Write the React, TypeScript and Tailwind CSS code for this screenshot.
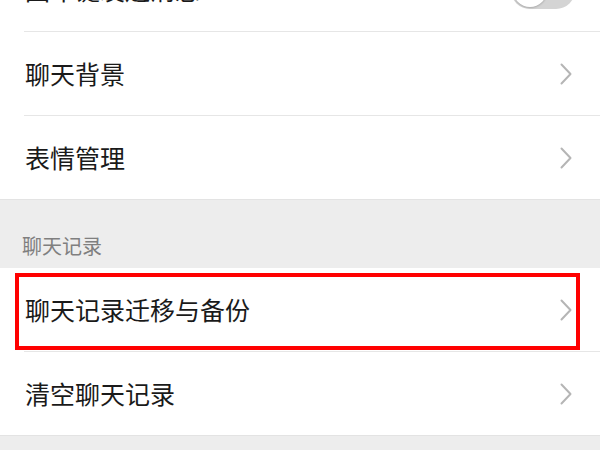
import React from "react";

const font = { fontFamily: '"Noto Sans CJK SC", "Noto Sans", sans-serif' };

function Chevron() {
  return (
    <svg width="12" height="22" viewBox="0 0 12 22" fill="none">
      <polyline points="1.5,1.5 10.5,11 1.5,20.5" stroke="#b5b5b5" strokeWidth="2" strokeLinecap="round" strokeLinejoin="round" />
    </svg>
  );
}

function Row({ label, right }: { label: string; right?: React.ReactNode }) {
  return (
    <div className="h-[83px] flex items-center justify-between pl-[25px] pr-[28px] bg-white">
      <span className="text-[25px] leading-none text-[#1a1a1a]">{label}</span>
      {right ?? <Chevron />}
    </div>
  );
}

function Divider() {
  return <div className="h-px ml-[24px] bg-[#e6e6e6]" />;
}

function Toggle() {
  return (
    <div className="w-[64px] h-[38px] rounded-full bg-[#d4d4d4] p-[2px] flex items-center -mr-[3px]">
      <div className="w-[34px] h-[34px] rounded-full bg-white shadow-[0_1px_2px_rgba(0,0,0,0.2)]" />
    </div>
  );
}

export default function App() {
  return (
    <div className="w-[600px] h-[450px] overflow-hidden bg-[#ededed]" style={font}>
      <div className="-mt-[52px] bg-white">
        <Row label="回车键发送消息" right={<Toggle />} />
        <Divider />
        <Row label="聊天背景" />
        <Divider />
        <Row label="表情管理" />
      </div>
      <div className="h-[69px] bg-[#ededed] border-t border-[#e3e3e3] flex items-end pl-[22px] pb-[12px]">
        <span className="text-[20px] leading-none text-[#7f7f7f]">聊天记录</span>
      </div>
      <div className="bg-white">
        <div className="relative">
          <Row label="聊天记录迁移与备份" />
          <div className="absolute left-[15px] top-[5px] w-[565px] h-[77px] border-[4px] border-[#ff0000]" />
        </div>
        <Divider />
        <Row label="清空聊天记录" />
      </div>
      <div className="border-t border-[#e3e3e3]" />
    </div>
  );
}
